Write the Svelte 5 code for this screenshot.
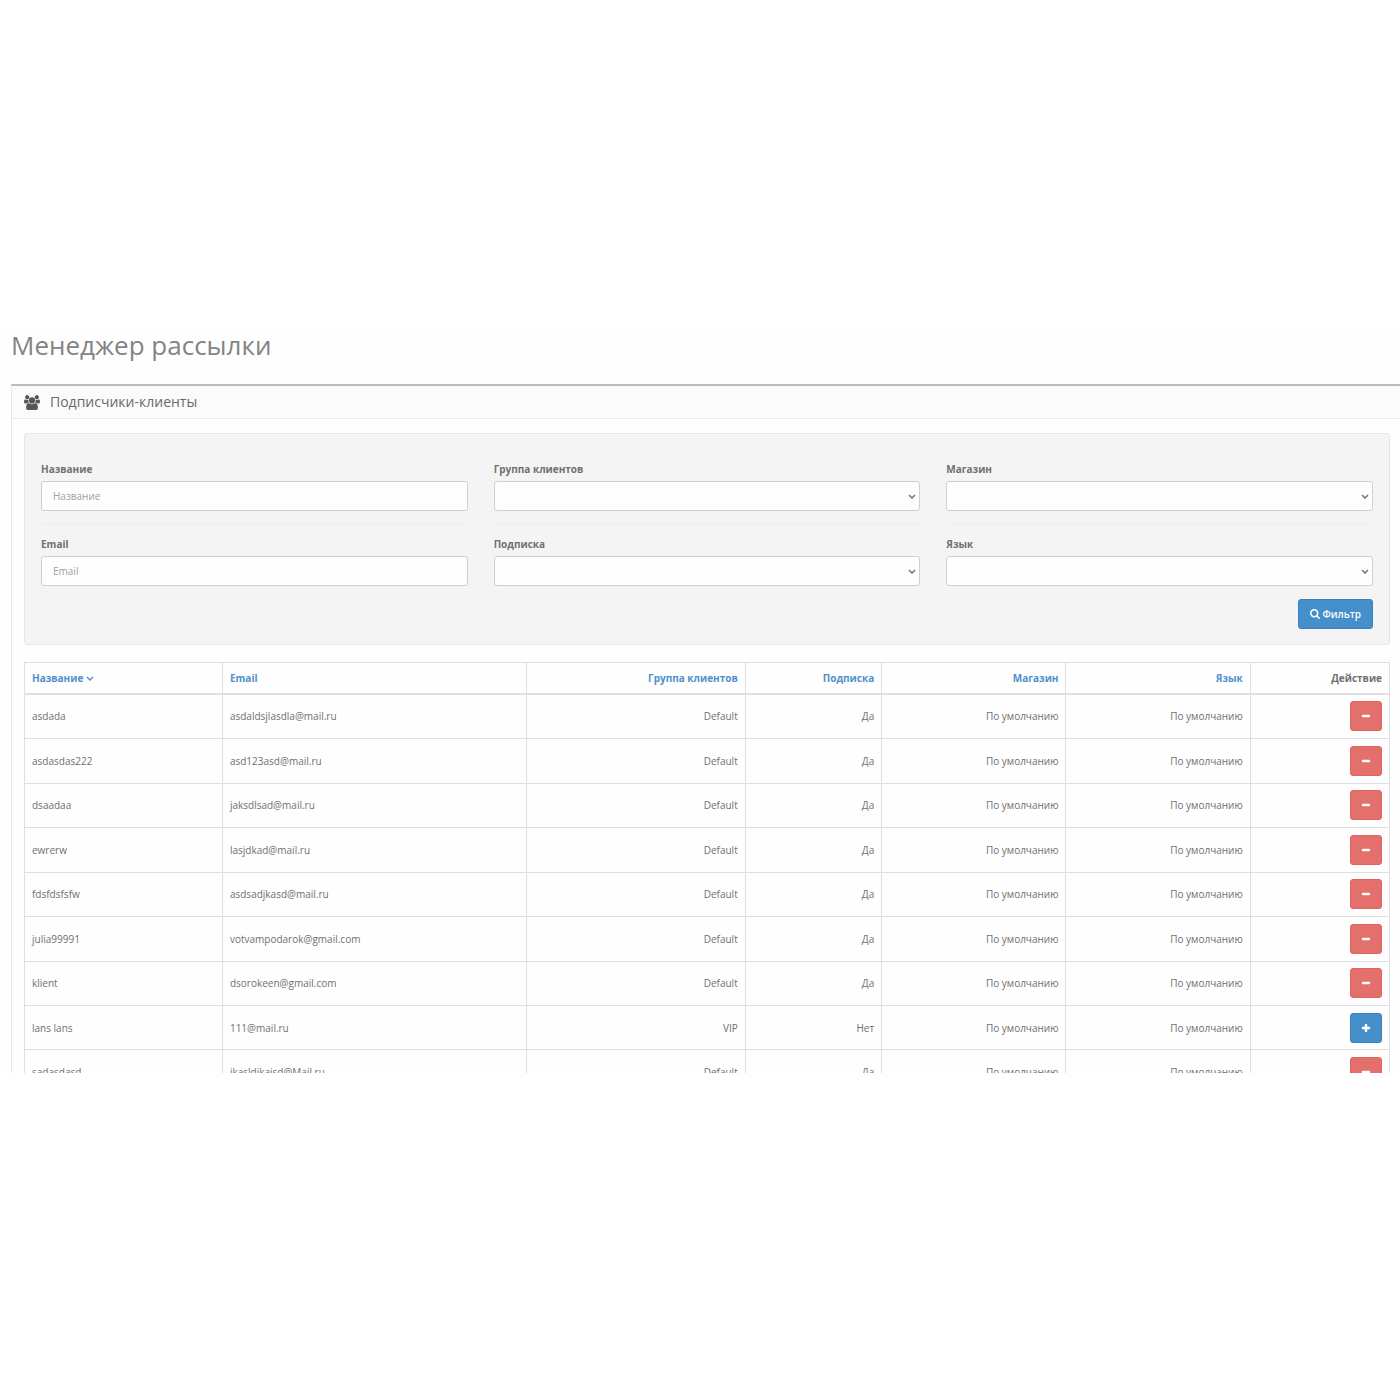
<script>
  const textFields = ['Название', 'Email'];
  const groups = [
    ['Группа клиентов', 'Подписка'],
    ['Магазин', 'Язык'],
  ];
  const widths = ['name', 'email', 'group', 'sub', 'store', 'lang', 'action'];
  const sortable = ['Группа клиентов', 'Подписка', 'Магазин', 'Язык'];
  const rows = [
    { name: 'asdada', email: 'asdaldsjlasdla@mail.ru', group: 'Default', subscribed: true },
    { name: 'asdasdas222', email: 'asd123asd@mail.ru', group: 'Default', subscribed: true },
    { name: 'dsaadaa', email: 'jaksdlsad@mail.ru', group: 'Default', subscribed: true },
    { name: 'ewrerw', email: 'lasjdkad@mail.ru', group: 'Default', subscribed: true },
    { name: 'fdsfdsfsfw', email: 'asdsadjkasd@mail.ru', group: 'Default', subscribed: true },
    { name: 'julia99991', email: 'votvampodarok@gmail.com', group: 'Default', subscribed: true },
    { name: 'klient', email: 'dsorokeen@gmail.com', group: 'Default', subscribed: true },
    { name: 'lans lans', email: '111@mail.ru', group: 'VIP', subscribed: false },
    { name: 'sadasdasd', email: 'jkasldjkajsd@Mail.ru', group: 'Default', subscribed: true },
  ];
</script>

<main class="screen">
  <h1>Менеджер рассылки</h1>

  <section class="panel">
    <header class="panel-head">
      <svg class="users" viewBox="0 0 1920 1792" aria-hidden="true">
        <path d="M593 896q-162 5-265 128h-134q-82 0-138-40.5t-56-118.5q0-353 124-353 6 0 43.5 21t97.5 42.5 119 21.5q67 0 133-23-5 37-5 66 0 139 81 256zm1071 637q0 120-73 189.5t-194 69.5h-874q-121 0-194-69.5t-73-189.5q0-53 3.5-103.5t14-109 26.5-108.5 43-97.5 62-81 85.5-53.5 111.5-20q10 0 43 21.5t73 48 107 48 135 21.5 135-21.5 107-48 73-48 43-21.5q61 0 111.5 20t85.5 53.5 62 81 43 97.5 26.5 108.5 14 109 3.5 103.5zm-1024-1277q0 106-75 181t-181 75-181-75-75-181 75-181 181-75 181 75 75 181zm704 384q0 159-112.5 271.5t-271.5 112.5-271.5-112.5-112.5-271.5 112.5-271.5 271.5-112.5 271.5 112.5 112.5 271.5zm576 225q0 78-56 118.5t-138 40.5h-134q-103-123-265-128 81-117 81-256 0-29-5-66 66 23 133 23 59 0 119-21.5t97.5-42.5 43.5-21q124 0 124 353zm-128-609q0 106-75 181t-181 75-181-75-75-181 75-181 181-75 181 75 75 181z" />
      </svg>
      <h2>Подписчики-клиенты</h2>
    </header>

    <div class="panel-body">
      <form class="well" onsubmit={(e) => e.preventDefault()}>
        <div class="columns">
          <div class="column">
            {#each textFields as label, i}
              <div class="field">
                <label for="text-{i}">{label}</label>
                <input id="text-{i}" type="text" placeholder={label} />
              </div>
            {/each}
          </div>
          {#each groups as group, g}
            <div class="column">
              {#each group as label, i}
                <div class="field">
                  <label for="select-{g}-{i}">{label}</label>
                  <div class="select">
                    <select id="select-{g}-{i}"><option value=""></option></select>
                    <svg viewBox="0 0 8 5" aria-hidden="true"><path d="M1 1l3 3 3-3" /></svg>
                  </div>
                </div>
              {/each}
            </div>
          {/each}
        </div>
        <div class="submit">
          <button class="btn filter" type="submit">
            <svg class="search" viewBox="64 128 1664 1664" aria-hidden="true">
              <path d="M1216 832q0-185-131.5-316.5t-316.5-131.5-316.5 131.5-131.5 316.5 131.5 316.5 316.5 131.5 316.5-131.5 131.5-316.5zm512 832q0 52-38 90t-90 38q-54 0-90-38l-343-342q-179 124-399 124-143 0-273.5-55.5t-225-150-150-225-55.5-273.5 55.5-273.5 150-225 225-150 273.5-55.5 273.5 55.5 225 150 150 225 55.5 273.5q0 220-124 399l343 343q37 37 37 90z" />
            </svg>
            Фильтр
          </button>
        </div>
      </form>

      <table>
        <colgroup>
          {#each widths as w}<col class="col-{w}" />{/each}
        </colgroup>
        <thead>
          <tr>
            <th>
              <a href="#name">Название
                <svg class="caret" viewBox="0 0 8 5" aria-hidden="true"><path d="M1 1l3 3 3-3" /></svg></a>
            </th>
            <th><a href="#email">Email</a></th>
            {#each sortable as title}
              <th class="right"><a href="#sort">{title}</a></th>
            {/each}
            <th class="right">Действие</th>
          </tr>
        </thead>
        <tbody>
          {#each rows as row}
            <tr>
              <td>{row.name}</td>
              <td>{row.email}</td>
              <td class="right">{row.group}</td>
              <td class="right">{row.subscribed ? 'Да' : 'Нет'}</td>
              <td class="right">По умолчанию</td>
              <td class="right">По умолчанию</td>
              <td class="right">
                <button
                  class="btn action"
                  class:danger={row.subscribed}
                  type="button"
                  aria-label={row.subscribed ? 'Отписать' : 'Подписать'}
                >
                  <svg viewBox="0 0 10 10" aria-hidden="true">
                    <path d={row.subscribed ? 'M2 5h6' : 'M2 5h6M5 2v6'} />
                  </svg>
                </button>
              </td>
            </tr>
          {/each}
        </tbody>
      </table>
    </div>
  </section>
</main>

<style>
  :global(body) {
    margin: 0;
    background: #fff;
  }
  .screen,
  .screen * {
    box-sizing: border-box;
  }
  .screen {
    margin-top: 325px;
    max-height: 748px;
    overflow: hidden;
    padding-left: 11px;
    background: #fefefe;
    color: #707070;
    font: 10px/16px 'Open Sans', sans-serif;
  }
  h1 {
    margin: 0;
    padding: 4px 0 23px;
    color: #848484;
    font-size: 26px;
    font-weight: 400;
    line-height: 32px;
  }
  .panel {
    border-top: 2px solid #bcbcbc;
    border-left: 1px solid #e8e8e8;
  }
  .panel-head {
    display: flex;
    align-items: center;
    gap: 10px;
    height: 33px;
    padding-left: 12px;
    border-bottom: 1px solid #ebebeb;
    background: #fbfbfb;
  }
  .users {
    width: 16px;
    height: 15px;
    fill: #555;
  }
  h2 {
    margin: 0;
    color: #6a6a6a;
    font-size: 14px;
    font-weight: 400;
    line-height: 20px;
  }
  .panel-body {
    padding: 14px 10px 14px 12px;
  }
  .well {
    margin-bottom: 17px;
    padding: 16px 16px 15px;
    border: 1px solid #e6e6e6;
    border-radius: 3px;
    background: #f4f4f4;
  }
  .columns {
    display: grid;
    grid-template-columns: repeat(3, 1fr);
    gap: 26px;
  }
  .field {
    display: flex;
    flex-direction: column;
    gap: 4px;
    padding: 11px 0 13px;
  }
  .field + .field {
    border-top: 1px solid #eee;
  }
  label {
    font-weight: 700;
  }
  input,
  select {
    display: block;
    width: 100%;
    height: 30px;
    border: 1px solid #d0d0d0;
    border-radius: 3px;
    background: #fefefe;
    color: #555;
    font: inherit;
  }
  input {
    padding: 0 11px;
  }
  input::placeholder {
    color: #a0a0a0;
  }
  .select {
    display: grid;
    align-items: center;
    justify-items: end;
  }
  .select > * {
    grid-area: 1 / 1;
  }
  select {
    padding: 0 11px;
    appearance: none;
  }
  .select svg {
    width: 8px;
    height: 5px;
    margin-right: 4px;
    fill: none;
    stroke: #777;
    stroke-width: 1.6;
    pointer-events: none;
  }
  .submit {
    display: flex;
    justify-content: flex-end;
  }
  .btn {
    display: inline-flex;
    align-items: center;
    justify-content: center;
    gap: 2px;
    height: 30px;
    border: 1px solid #3c81bb;
    border-radius: 3px;
    background: #458fcb;
    color: #fff;
    font: inherit;
    font-weight: 600;
  }
  .filter {
    padding: 0 11px;
  }
  .search {
    width: 10px;
    height: 10px;
    fill: #fff;
  }
  table {
    width: 100%;
    height: 433px;
    border-collapse: collapse;
    table-layout: fixed;
  }
  .col-name { width: 14.5%; }
  .col-email { width: 22.3%; }
  .col-group { width: 16%; }
  .col-sub { width: 10%; }
  .col-store,
  .col-lang { width: 13.5%; }
  .col-action { width: 10.2%; }
  th,
  td {
    padding: 0 7px;
    border: 1px solid #dfdfdf;
    text-align: left;
  }
  th {
    height: 31px;
    border-bottom-width: 2px;
    font-weight: 700;
  }
  .right {
    text-align: right;
  }
  a {
    color: #4f90cc;
    text-decoration: none;
  }
  .caret {
    width: 8px;
    height: 5px;
    margin-bottom: 1px;
    fill: none;
    stroke: currentColor;
    stroke-width: 1.4;
  }
  .action {
    width: 32px;
    padding: 0;
    vertical-align: middle;
  }
  .danger {
    border-color: #e2645f;
    background: #e3706c;
  }
  .action svg {
    width: 10px;
    height: 10px;
    fill: none;
    stroke: #fff;
    stroke-linecap: round;
    stroke-width: 2.4;
  }
</style>
